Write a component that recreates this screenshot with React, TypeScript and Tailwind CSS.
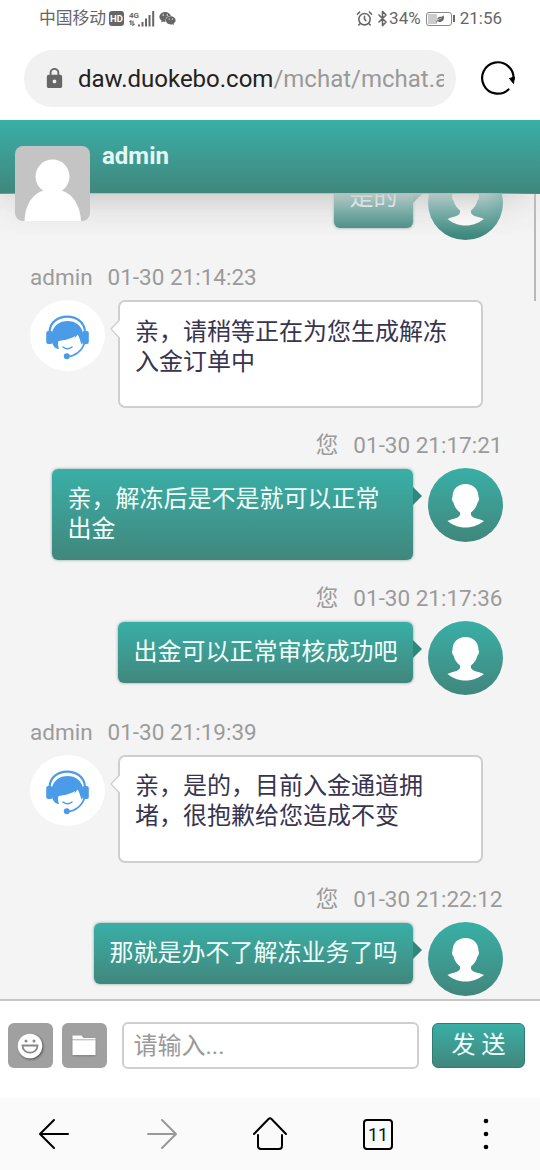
import React from "react";
import { Bluetooth, AlarmClock } from "lucide-react";
import { FaWeixin, FaLeaf } from "react-icons/fa";
import { MdLock } from "react-icons/md";

type Message = {
  from: "admin" | "me";
  time?: string;
  lines: string[];
  // block height and bubble size
  block: string;
  bubble: string;
};

const messages: Message[] = [
  {
    from: "me",
    lines: ["是的"],
    block: "h-[96px]",
    bubble: "w-[79px] h-[61px]",
  },
  {
    from: "admin",
    time: "01-30 21:14:23",
    lines: ["亲，请稍等正在为您生成解冻", "入金订单中"],
    block: "h-[168px]",
    bubble: "w-[365px] h-[108px]",
  },
  {
    from: "me",
    time: "01-30 21:17:21",
    lines: ["亲，解冻后是不是就可以正常", "出金"],
    block: "h-[153px]",
    bubble: "w-[361px] h-[91px]",
  },
  {
    from: "me",
    time: "01-30 21:17:36",
    lines: ["出金可以正常审核成功吧"],
    block: "h-[133.500px]",
    bubble: "w-[295px] h-[61px]",
  },
  {
    from: "admin",
    time: "01-30 21:19:39",
    lines: ["亲，是的，目前入金通道拥", "堵，很抱歉给您造成不变"],
    block: "h-[167.500px]",
    bubble: "w-[365px] h-[108px]",
  },
  {
    from: "me",
    time: "01-30 21:22:12",
    lines: ["那就是办不了解冻业务了吗"],
    block: "h-[134px]",
    bubble: "w-[319px] h-[61px]",
  },
];

const AgentAvatar = () => (
  <svg viewBox="0 0 75 71" className="w-[75px] h-[71px] shrink-0">
    <ellipse cx="37.5" cy="35.5" rx="37.5" ry="35.5" fill="#fff" />
    <g fill="none" stroke="#4a9be8" strokeLinecap="round">
      <path d="M19.5 32C20.500 11.500 54 11.500 55 32" strokeWidth="2.200" />
      <path d="M54.500 43C52 51 45 56 37.500 56.500" strokeWidth="1.700" />
      <path d="M33 47Q37.500 50.500 42 47" strokeWidth="1.500" />
    </g>
    <g fill="#4a9be8">
      <path d="M23 45C18.500 32 25 21 37.500 21S56.500 32 52 45C50.500 43 50 38 47.500 34.500L44.500 38.500L45 36C40 39.500 34 40 28.500 41C27.500 43.500 28 46 29 49C26.500 49 24.500 47.500 23 45Z" />
      <rect x="16.200" y="31" width="6.500" height="13" rx="2" />
      <rect x="52.300" y="31" width="6.500" height="13" rx="2" />
      <circle cx="36.800" cy="56.300" r="3" />
    </g>
  </svg>
);

const UserAvatar = () => (
  <div className="w-[75px] h-[74px] shrink-0 rounded-[50%] bg-linear-to-b from-[#38afa6] to-[#40877d]">
    <svg viewBox="0 0 75 74" className="w-full h-full">
      <path
        fill="#fff"
        d="M37.500 16C45 16 50.500 21 50.500 29C51.500 30 51 33 49.500 34.500C48.500 39 46 42 43 44.500V47C45 51 51 50.500 56 53C49 58 43 59.500 37.500 59.500S26 58 19.500 53C24 50.500 30 51 32 47V44.500C29 42 26.500 39 25.500 34.500C24 33 23.500 30 24.500 29C24.500 21 30 16 37.500 16Z"
      />
    </svg>
  </div>
);

const ChatMessage = ({ message }: { message: Message }) => {
  const { from, time, lines, block, bubble } = message;
  if (from === "admin") {
    return (
      <div className={`shrink-0 pl-[30px] ${block}`}>
        <div className="h-[38px] leading-[30px] text-[22.500px] text-[#9b9b9b]">
          <span className="mr-[15px]">admin</span>
          <span>{time}</span>
        </div>
        <div className="flex items-start gap-[13px]">
          <AgentAvatar />
          <div
            className={`relative rounded-[7px] border-2 border-[#cfcfcf] bg-white pl-[15px] pt-[14.500px] text-2xl leading-[30px] text-[#38344f] ${bubble}`}
          >
            <svg
              viewBox="0 0 11 20"
              className="absolute -left-[10px] top-[17px] w-[11px] h-5"
            >
              <path d="M11 0L1 10L11 20Z" fill="#fff" />
              <path d="M9.500 1L1 10L9.500 19" fill="none" stroke="#cfcfcf" strokeWidth="1.300" />
            </svg>
            {lines.map((line) => (
              <div key={line} className="whitespace-nowrap">
                {line}
              </div>
            ))}
          </div>
        </div>
      </div>
    );
  }
  return (
    <div className={`shrink-0 pr-[37.500px] ${block}`}>
      {time && (
        <div className="h-[38px] text-right leading-[30px] text-[22.500px] text-[#9b9b9b]">
          <span className="mr-[15px]">您</span>
          <span>{time}</span>
        </div>
      )}
      <div className="flex items-start justify-end gap-[14.500px]">
        <div
          className={`relative mt-px rounded-md bg-linear-to-b from-[#38afa6] to-[#40877d] pl-[15.500px] pt-[15px] text-2xl leading-[30px] text-[#f2fffd] shadow-[0_0_3px_rgba(0,70,60,0.5)] ${bubble}`}
        >
          <svg
            viewBox="0 0 9 18"
            className="absolute -right-[9px] top-[18px] w-[9px] h-[18px]"
          >
            <path d="M0 0L9 9L0 18Z" fill="#2e897c" />
          </svg>
          {lines.map((line) => (
            <div key={line} className="whitespace-nowrap">
              {line}
            </div>
          ))}
        </div>
        <UserAvatar />
      </div>
    </div>
  );
};

const StatusBar = () => (
  <div className="h-[37px] shrink-0 flex items-center justify-between pl-[39px] pr-[38px] text-[17px] text-[#666]">
    <div className="flex items-center">
      <span className="w-[68px] whitespace-nowrap text-[16.800px]">中国移动</span>
      <span className="ml-0.5 w-[15px] h-[15px] rounded-[3px] bg-[#666] text-center text-[9.500px] font-bold leading-[15px] text-white">
        HD
      </span>
      <div className="ml-[5px] w-[9px] h-4 leading-none">
        <div className="text-[8px] font-bold leading-[9px]">4G</div>
        <svg viewBox="0 0 8 6" className="w-[7px] h-[6px]">
          <path d="M0.500 2L2.200 0.500V5.500M4.500 0.500V5.500L6.500 4" fill="none" stroke="#666" strokeWidth="1.400" />
        </svg>
      </div>
      <svg viewBox="0 0 17 16" className="w-[17px] h-4" fill="#666">
        <rect x="0" y="13.500" width="2" height="2" />
        <rect x="3.500" y="11" width="2" height="4.500" />
        <rect x="7" y="7.500" width="2" height="8" />
        <rect x="10.500" y="4" width="2" height="11.500" />
        <rect x="14.200" y="0" width="2" height="15.500" />
      </svg>
      <FaWeixin size={17} className="ml-1" />
    </div>
    <div className="flex items-center">
      <AlarmClock size={17} strokeWidth={2.2} />
      <Bluetooth size={17} strokeWidth={2.2} className="ml-px -mr-0.5" />
      <span>34%</span>
      <span className="ml-[5px] w-[26px] h-[14px] rounded-[3px] border border-[#888] p-px flex items-center">
        <span className="w-[9px] h-full shrink-0 bg-[#ccc]" />
        <FaLeaf size={8} className="-ml-px" />
      </span>
      <span className="ml-px w-0.5 h-[7px] bg-[#666]" />
      <span className="ml-[5px]">21:56</span>
    </div>
  </div>
);

const AddressBar = () => (
  <div className="h-[83px] shrink-0 flex items-start pt-[13px] pl-6">
    <div className="w-[432px] h-[57px] rounded-full bg-[#f1f1f1] flex items-center pl-[19px] text-[24px]">
      <MdLock size={23} className="text-[#666]" />
      <div className="ml-3 w-[366px] overflow-hidden whitespace-nowrap text-[#222]">
        daw.duokebo.com<span className="text-[#999]">/mchat/mchat.a</span>
      </div>
    </div>
    <svg viewBox="0 0 36 36" className="ml-6 mt-[10px] w-9 h-9">
      <path d="M28.500 29.500A15.700 15.700 0 1 1 33.500 19" fill="none" stroke="#000" strokeWidth="2.200" strokeLinecap="round" />
      <path d="M29.500 18.500L34.500 17L33.500 23.500Z" fill="#000" stroke="#000" strokeLinejoin="round" />
    </svg>
  </div>
);

const Header = () => (
  <header className="relative z-10 h-[73.500px] shrink-0 flex items-start border-b border-[#2c776c] bg-linear-to-b from-[#38afa6] to-[#40877d] pl-[15px]">
    <svg viewBox="0 0 75 75" className="relative z-10 mt-[26px] w-[75px] h-[75px] shrink-0 rounded-lg bg-[#c4c4c4]">
      <circle cx="37.500" cy="30.500" r="17" fill="#fff" />
      <path d="M9.500 75C10 58 19 44.500 32 44.500H43C56 44.500 65 58 66 75Z" fill="#fff" />
    </svg>
    <h1 className="ml-3 mt-[21px] text-2xl font-bold leading-[30px] text-[#e3f7f4]">admin</h1>
    {/* shade falling on the messages */}
    <div className="absolute left-0 top-[73px] w-full h-[42px] bg-linear-to-b from-[#cdcdcd]/85 via-[#d6d6d6]/35 to-[#f4f4f4]/0 [mask-image:linear-gradient(to_right,rgba(0,0,0,0.4),#000_8%,#000_90%,rgba(0,0,0,0.2))]" />
  </header>
);

const InputBar = () => (
  <div className="h-[99px] shrink-0 flex items-start border-t-2 border-[#c6c6c6] bg-white pt-[21px] pl-[7.500px]">
    <button className="mt-px w-[45px] h-[45px] rounded-md bg-[#a0a0a0] flex items-center justify-center">
      <svg viewBox="0 0 26 26" className="w-[26px] h-[26px] drop-shadow-[1px_1px_1px_rgba(0,0,0,0.5)]">
        <circle cx="13" cy="13" r="12.300" fill="#fff" />
        <circle cx="9" cy="8" r="1.500" fill="#888" />
        <circle cx="17" cy="8" r="1.500" fill="#888" />
        <path d="M5.500 12.500H20.500C20.500 22 5.500 22 5.500 12.500Z" fill="#fff" stroke="#888" strokeWidth="1.800" />
      </svg>
    </button>
    <button className="ml-[9px] mt-px w-[45px] h-[45px] rounded-md bg-[#a0a0a0] flex items-center justify-center">
      <svg viewBox="0 0 24 21" className="w-6 h-[21px] drop-shadow-[0_1px_1px_rgba(0,0,0,0.2)]" fill="#fff">
        <path d="M0.500 0.500H9.500L11.500 3H23.500V4.500H0.500Z" />
        <path d="M0.500 5.200H23.500V20H0.500Z" />
      </svg>
    </button>
    <input
      placeholder="请输入..."
      className="ml-[15px] w-[297px] h-[47px] rounded-md border-2 border-[#cfcfcf] bg-white pl-[10px] text-2xl placeholder:text-[#999] outline-none"
    />
    <button className="ml-[13.500px] mt-px w-[93px] h-[45px] rounded-md border border-[#2e7c72] bg-linear-to-b from-[#38afa6] to-[#40877d] pb-px text-2xl text-[#f2fffd]">
      发 送
    </button>
  </div>
);

const BottomNav = () => (
  <nav className="h-[72px] shrink-0 grid grid-cols-5 place-items-center bg-[#fafafa]">
    <svg viewBox="0 0 32 32" className="w-8 h-8" fill="none" stroke="#000" strokeWidth="2" strokeLinecap="round" strokeLinejoin="round">
      <path d="M30 16H2M16 2L2 16L16 30" />
    </svg>
    <svg viewBox="0 0 32 32" className="w-8 h-8" fill="none" stroke="#999" strokeWidth="2" strokeLinecap="round" strokeLinejoin="round">
      <path d="M2 16H30M16 2L30 16L16 30" />
    </svg>
    <svg viewBox="0 0 36 36" className="w-9 h-9" fill="none" stroke="#000" strokeWidth="2" strokeLinecap="round" strokeLinejoin="round">
      <path d="M2 18L16.500 3Q18 1.500 19.500 3L34 18M6 19V30Q6 33 9 33H27Q30 33 30 30V19" />
    </svg>
    <div className="w-[30px] h-[31px] rounded-[4px] border-2 border-black text-center text-[18px] leading-[27px] text-[#111]">
      11
    </div>
    <svg viewBox="0 0 6 32" className="w-1.5 h-8">
      <circle cx="3" cy="3" r="2.300" />
      <circle cx="3" cy="16" r="2.300" />
      <circle cx="3" cy="29" r="2.300" />
    </svg>
  </nav>
);

const App = () => {
  return (
    <div className="w-[540px] h-[1170px] flex flex-col overflow-hidden bg-white font-['Roboto','Noto_Sans_CJK_SC',sans-serif]">
      <StatusBar />
      <AddressBar />
      <Header />
      <main className="h-[805.500px] shrink-0 flex bg-[#f4f4f4] overflow-hidden">
        <div className="-mt-[27.500px] flex w-[540px] shrink-0 flex-col">
          {messages.map((message) => (
            <ChatMessage key={message.lines[0]} message={message} />
          ))}
        </div>
        <div className="-ml-[6px] w-0.5 h-[107px] bg-[#b9b9b9]" />
      </main>
      <InputBar />
      <BottomNav />
    </div>
  );
};

export default App;
